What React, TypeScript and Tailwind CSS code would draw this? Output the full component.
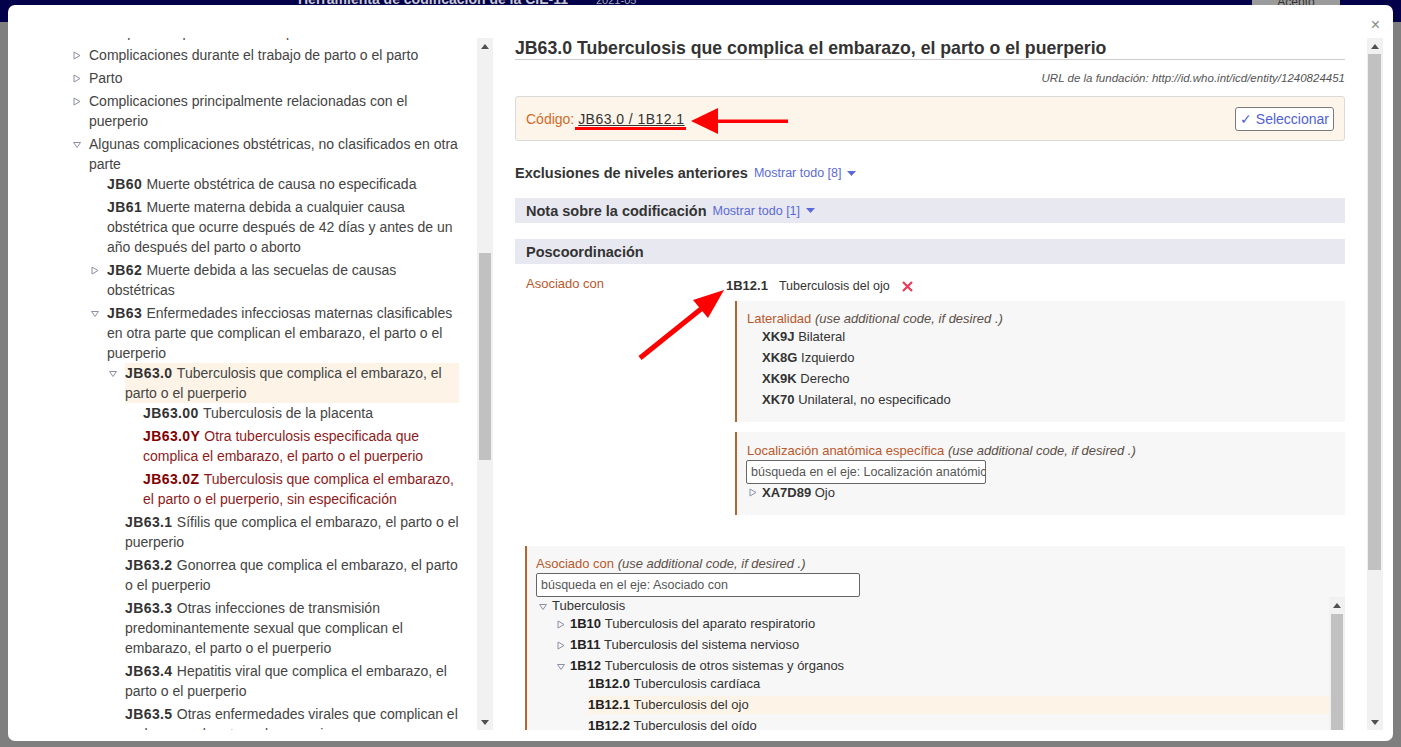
import React from "react";

type Item = {
  code?: string;
  text: string;
  tri?: "r" | "d";
  red?: boolean;
  hl?: boolean;
  kids?: Item[];
};

const leftTree: Item[] = [
  { text: "o con posibles problemas en el parto" },
  { tri: "r", text: "Complicaciones durante el trabajo de parto o el parto" },
  { tri: "r", text: "Parto" },
  { tri: "r", text: "Complicaciones principalmente relacionadas con el puerperio" },
  {
    tri: "d",
    text: "Algunas complicaciones obstétricas, no clasificados en otra parte",
    kids: [
      { code: "JB60", text: "Muerte obstétrica de causa no especificada" },
      {
        code: "JB61",
        text: "Muerte materna debida a cualquier causa obstétrica que ocurre después de 42 días y antes de un año después del parto o aborto",
      },
      { tri: "r", code: "JB62", text: "Muerte debida a las secuelas de causas obstétricas" },
      {
        tri: "d",
        code: "JB63",
        text: "Enfermedades infecciosas maternas clasificables en otra parte que complican el embarazo, el parto o el puerperio",
        kids: [
          {
            tri: "d",
            hl: true,
            code: "JB63.0",
            text: "Tuberculosis que complica el embarazo, el parto o el puerperio",
            kids: [
              { code: "JB63.00", text: "Tuberculosis de la placenta" },
              {
                red: true,
                code: "JB63.0Y",
                text: "Otra tuberculosis especificada que complica el embarazo, el parto o el puerperio",
              },
              {
                red: true,
                code: "JB63.0Z",
                text: "Tuberculosis que complica el embarazo, el parto o el puerperio, sin especificación",
              },
            ],
          },
          { code: "JB63.1", text: "Sífilis que complica el embarazo, el parto o el puerperio" },
          { code: "JB63.2", text: "Gonorrea que complica el embarazo, el parto o el puerperio" },
          {
            code: "JB63.3",
            text: "Otras infecciones de transmisión predominantemente sexual que complican el embarazo, el parto o el puerperio",
          },
          { code: "JB63.4", text: "Hepatitis viral que complica el embarazo, el parto o el puerperio" },
          { code: "JB63.5", text: "Otras enfermedades virales que complican el embarazo, el parto o el puerperio" },
        ],
      },
    ],
  },
];

const axisTree: Item[] = [
  {
    tri: "d",
    text: "Tuberculosis",
    kids: [
      { tri: "r", code: "1B10", text: "Tuberculosis del aparato respiratorio" },
      { tri: "r", code: "1B11", text: "Tuberculosis del sistema nervioso" },
      {
        tri: "d",
        code: "1B12",
        text: "Tuberculosis de otros sistemas y órganos",
        kids: [
          { code: "1B12.0", text: "Tuberculosis cardíaca" },
          { code: "1B12.1", text: "Tuberculosis del ojo", hl: true },
          { code: "1B12.2", text: "Tuberculosis del oído" },
          { code: "1B12.3", text: "Tuberculosis de la piel" },
        ],
      },
    ],
  },
];

const pad = ["pl-0", "pl-[18px]", "pl-[36px]", "pl-[54px]", "pl-[72px]"];

function TriRight() {
  return (
    <svg width="8" height="9" viewBox="0 0 8 9">
      <path d="M1 1 L7 4.5 L1 8 Z" fill="none" stroke="#8c90a4" strokeWidth="1" />
    </svg>
  );
}

function TriDown() {
  return (
    <svg width="8" height="6" viewBox="0 0 8 6">
      <path d="M0.5 0.5 L7.5 0.5 L4 5.5 Z" fill="none" stroke="#8c90a4" strokeWidth="1" />
    </svg>
  );
}

function TreeNode({ item, level, first }: { item: Item; level: number; first: boolean }) {
  return (
    <div className={first ? "" : "mt-[3px]"}>
      <div className={`flex ${pad[level]}`}>
        <span className="w-[19px] shrink-0 pl-[3px]">
          {item.tri === "r" && (
            <span className="block pt-[6px]">
              <TriRight />
            </span>
          )}
          {item.tri === "d" && (
            <span className="block pt-[8px]">
              <TriDown />
            </span>
          )}
        </span>
        <span className={`flex-1 ${item.hl ? "bg-[#fdf4e7]" : ""} ${item.red ? "text-[#8e1b1b]" : "text-[#444]"}`}>
          {item.code && (
            <b className={`tracking-[0.4px] ${item.red ? "text-[#830000]" : "text-[#333]"}`}>{item.code} </b>
          )}
          {item.text}
        </span>
      </div>
      {item.kids?.map((k, i) => (
        <TreeNode key={i} item={k} level={level + 1} first={i === 0} />
      ))}
    </div>
  );
}

function AxisNode({ item, level, first }: { item: Item; level: number; first: boolean }) {
  return (
    <div className={first ? "" : "mt-[3px]"}>
      <div className={`flex ${pad[level]}`}>
        <span className="w-[16px] shrink-0 pl-[3px]">
          {item.tri === "r" && (
            <span className="block pt-[5px]">
              <TriRight />
            </span>
          )}
          {item.tri === "d" && (
            <span className="block pt-[7px]">
              <TriDown />
            </span>
          )}
        </span>
        <span className={`flex-1 text-[#333] ${item.hl ? "bg-[#fdf4e7]" : ""}`}>
          {item.code && <b className="text-[#222]">{item.code} </b>}
          {item.text}
        </span>
      </div>
      {item.kids?.map((k, i) => (
        <AxisNode key={i} item={k} level={level + 1} first={i === 0} />
      ))}
    </div>
  );
}

function ArrowUp() {
  return (
    <svg width="8" height="5" viewBox="0 0 8 5">
      <path d="M0 5 L4 0 L8 5 Z" fill="#505050" />
    </svg>
  );
}

function ArrowDown() {
  return (
    <svg width="8" height="5" viewBox="0 0 8 5">
      <path d="M0 0 L8 0 L4 5 Z" fill="#505050" />
    </svg>
  );
}

function Caret() {
  return (
    <svg width="9" height="5" viewBox="0 0 9 5" className="ml-[6px] inline-block align-middle">
      <path d="M0 0 L9 0 L4.5 5 Z" fill="#5a6ad8" />
    </svg>
  );
}

function UseCode() {
  return <i className="text-[#5b5048]"> (use additional code, if desired .)</i>;
}

export default function App() {
  return (
    <div className="relative h-[747px] w-[1401px] overflow-hidden bg-[#7f7f7f] font-['Liberation_Sans',Arial,sans-serif]">
      {/* page behind the overlay */}
      <div className="flex h-[22px] items-start bg-[#03014a]">
        <div className="-mt-[8px] ml-[298px] whitespace-nowrap text-[14px] font-bold leading-[15px] text-[#c8c8d4]">
          Herramienta de codificación de la CIE-11
        </div>
        <div className="-mt-[6px] ml-[28px] text-[11px] leading-[12px] text-[#a9a9bb]">2021-05</div>
        <div className="ml-auto mr-[61px] h-[8px] w-[88px] bg-[#9b9b9b] text-center text-[12px] leading-[4px] text-[#333]">
          Acepto
        </div>
      </div>

      {/* modal */}
      <div className="absolute left-[8px] top-[5px] flex h-[736px] w-[1385px] rounded-[7px] bg-white pb-[11px] pt-[33px]">
        <button className="absolute right-[13px] top-[12px] text-[16px] leading-[16px] text-[#888]">×</button>

        {/* left tree */}
        <div className="ml-[62px] w-[389px] overflow-hidden text-[14px] leading-[20px]">
          <div className="-mt-[16px]">
            {leftTree.map((it, i) => (
              <TreeNode key={i} item={it} level={0} first={i === 0} />
            ))}
          </div>
        </div>

        {/* left scrollbar */}
        <div className="ml-[18px] flex w-[16px] flex-col bg-[#f1f1f1]">
          <div className="flex h-[16px] items-center justify-center">
            <ArrowUp />
          </div>
          <div className="flex-1">
            <div className="ml-[2px] mt-[199px] h-[207px] w-[12px] bg-[#c1c1c1]" />
          </div>
          <div className="flex h-[16px] items-center justify-center">
            <ArrowDown />
          </div>
        </div>

        {/* right details */}
        <div className="ml-[22px] w-[830px] overflow-hidden text-[13px] leading-[18px] text-[#333]">
          <h2 className="h-[22px] border-b border-[#cfcfcf] text-[17.7px] font-bold leading-[20px] text-[#333]">
            JB63.0 Tuberculosis que complica el embarazo, el parto o el puerperio
          </h2>
          <p className="mt-[10px] text-right text-[11.5px] italic leading-[16px] text-[#555]">
            URL de la fundación: http://id.who.int/icd/entity/1240824451
          </p>

          <div className="mt-[10px] flex h-[45px] items-center justify-between rounded-[3px] border border-[#dadada] bg-[#fdf5e9] px-[10px]">
            <div className="text-[14px]">
              <span className="text-[#d06a2a]">Código:</span>{" "}
              <span className="tracking-[0.45px] text-[#333] underline">JB63.0 / 1B12.1</span>
            </div>
            <button className="h-[24px] rounded-[3px] border border-[#7a7a7a] bg-white px-[4px] text-[14px] leading-[20px] text-[#4f5fd6]">
              ✓ Seleccionar
            </button>
          </div>

          <div className="mt-[22px] flex h-[20px] items-center">
            <span className="text-[14.5px] font-bold text-[#333]">Exclusiones de niveles anteriores</span>
            <span className="ml-[6px] text-[12.5px] text-[#5a6ad8]">Mostrar todo [8]</span>
            <Caret />
          </div>

          <div className="mt-[15px] flex h-[25px] items-center bg-[#e8e8f0] px-[11px]">
            <span className="text-[14.5px] font-bold text-[#333]">Nota sobre la codificación</span>
            <span className="ml-[6px] text-[12.5px] text-[#5a6ad8]">Mostrar todo [1]</span>
            <Caret />
          </div>

          <div className="mt-[16px] flex h-[25px] items-center bg-[#e8e8f0] px-[11px]">
            <span className="text-[14.5px] font-bold text-[#333]">Poscoordinación</span>
          </div>

          <div className="mt-[11px] flex">
            <div className="w-[211px] shrink-0 pl-[11px] text-[#b9582c]">Asociado con</div>
            <div className="flex-1">
              <div className="mt-[2px] flex items-center">
                <b className="text-[#333]">1B12.1</b>
                <span className="ml-[11px] text-[12.5px]">Tuberculosis del ojo</span>
                <svg width="11" height="11" viewBox="0 0 11 11" className="ml-[12px]">
                  <path d="M1 1 L10 10 M10 1 L1 10" stroke="#ee3a5a" strokeWidth="2.2" />
                </svg>
              </div>

              <div className="ml-[9px] mt-[6px] h-[121px] border-l-2 border-[#b5662e] bg-[#f7f7f7] pl-[10px] pt-[9px]">
                <div>
                  <span className="text-[#b9582c]">Lateralidad</span>
                  <UseCode />
                </div>
                <div className="-mt-[2px] pl-[15px] leading-[21px]">
                  <div>
                    <b>XK9J</b> Bilateral
                  </div>
                  <div>
                    <b>XK8G</b> Izquierdo
                  </div>
                  <div>
                    <b>XK9K</b> Derecho
                  </div>
                  <div>
                    <b>XK70</b> Unilateral, no especificado
                  </div>
                </div>
              </div>

              <div className="ml-[9px] mt-[10px] h-[83px] border-l-2 border-[#b5662e] bg-[#f7f7f7] pl-[9px] pt-[10px]">
                <div className="pl-[1px]">
                  <span className="text-[#b9582c]">Localización anatómica específica</span>
                  <UseCode />
                </div>
                <div className="flex h-[24px] w-[240px] items-center overflow-hidden whitespace-nowrap rounded-[2px] border border-[#666] bg-white px-[4px] text-[12.5px] text-[#555]">
                  búsqueda en el eje: Localización anatómica específica
                </div>
                <div className="mt-[1px] flex leading-[16px]">
                  <span className="w-[16px] shrink-0 pl-[3px] pt-[3px]">
                    <TriRight />
                  </span>
                  <span>
                    <b>XA7D89</b> Ojo
                  </span>
                </div>
              </div>
            </div>
          </div>

          <div className="ml-[10px] mt-[31px] flex h-[200px] flex-col border-l-2 border-[#b5662e] bg-[#f7f7f7] pl-[9px]">
            <div className="shrink-0 pt-[9px]">
              <span className="text-[#b9582c]">Asociado con</span>
              <UseCode />
            </div>
            <div className="flex h-[24px] w-[324px] shrink-0 items-center rounded-[2px] border border-[#666] bg-white px-[4px] text-[12.5px] text-[#555]">
              búsqueda en el eje: Asociado con
            </div>
            <div className="flex flex-1">
              <div className="flex-1 overflow-hidden">
                {axisTree.map((it, i) => (
                  <AxisNode key={i} item={it} level={0} first={i === 0} />
                ))}
              </div>
              <div className="flex w-[16px] flex-col bg-[#f1f1f1]">
                <div className="flex h-[17px] items-center justify-center">
                  <ArrowUp />
                </div>
                <div className="mx-[2px] flex-1 bg-[#c1c1c1]" />
              </div>
            </div>
          </div>
        </div>

        {/* right scrollbar */}
        <div className="ml-[22px] flex w-[16px] flex-col bg-[#f1f1f1]">
          <div className="flex h-[16px] items-center justify-center">
            <ArrowUp />
          </div>
          <div className="flex-1">
            <div className="ml-[1px] h-[516px] w-[13px] bg-[#c1c1c1]" />
          </div>
          <div className="flex h-[16px] items-center justify-center">
            <ArrowDown />
          </div>
        </div>
      </div>

      {/* red annotations */}
      <svg className="pointer-events-none absolute left-0 top-0" width="1401" height="747">
        <rect x="575" y="127" width="111" height="3" fill="#ff0000" />
        <path d="M691 121 L718 108 L718 134 Z" fill="#ff0000" />
        <rect x="716" y="119.5" width="72" height="3.5" fill="#ff0000" />
        <path d="M724 290 L708 318 L693 300 Z" fill="#ff0000" />
        <line x1="640" y1="358" x2="701" y2="309" stroke="#ff0000" strokeWidth="5" />
      </svg>
    </div>
  );
}
